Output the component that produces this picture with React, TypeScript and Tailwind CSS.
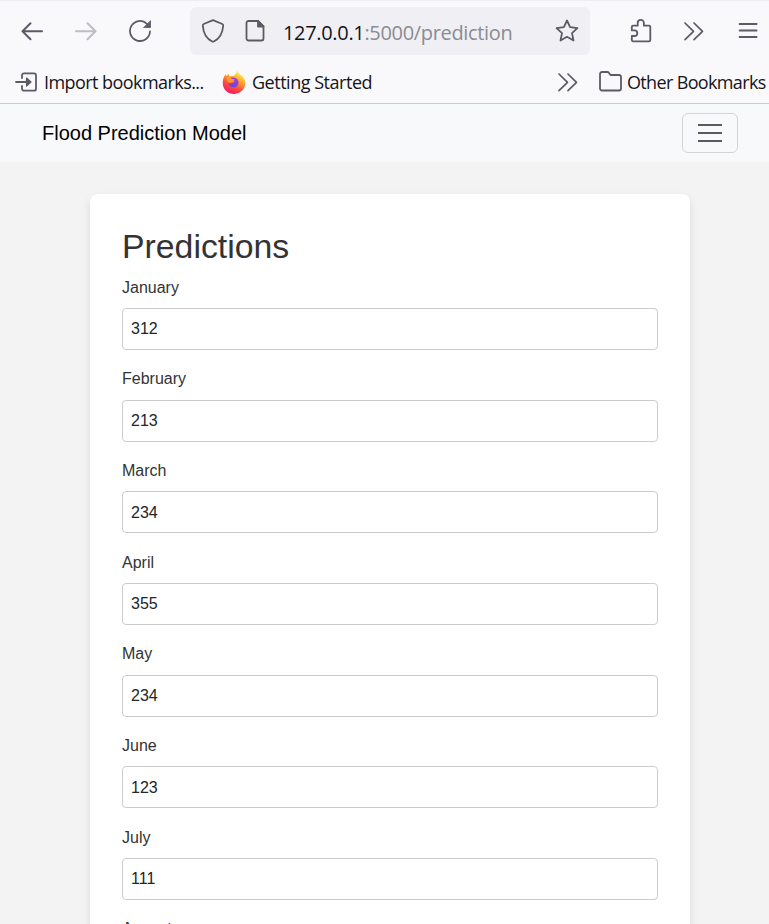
import React from "react";

const months: [string, string][] = [
  ["January", "312"],
  ["February", "213"],
  ["March", "234"],
  ["April", "355"],
  ["May", "234"],
  ["June", "123"],
  ["July", "111"],
  ["August", "222"],
];

function Icon({ className = "", size = 24, children }: { className?: string; size?: number; children: React.ReactNode }) {
  return (
    <svg
      width={size}
      height={size}
      viewBox={`0 0 ${size} ${size}`}
      fill="none"
      stroke="currentColor"
      strokeWidth="1.8"
      strokeLinecap="round"
      strokeLinejoin="round"
      className={`block shrink-0 ${className}`}
    >
      {children}
    </svg>
  );
}

function Chevrons({ className = "" }: { className?: string }) {
  return (
    <Icon className={className}>
      <path d="M4 4l8.500 8.300-8.500 8.300M13 4l8.500 8.300-8.500 8.300" strokeWidth="1.7" />
    </Icon>
  );
}

function FirefoxLogo() {
  return (
    <svg width="24" height="24" viewBox="0 0 24 24" className="ml-[18px] block shrink-0">
      <defs>
        <linearGradient id="flame" x1="0.8" y1="0" x2="0.3" y2="1">
          <stop offset="0.1" stopColor="#fff044" />
          <stop offset="0.4" stopColor="#ffa02a" />
          <stop offset="0.68" stopColor="#ff4b3e" />
          <stop offset="1" stopColor="#f5156c" />
        </linearGradient>
        <linearGradient id="globe" x1="0.7" y1="0" x2="0.3" y2="1">
          <stop offset="0" stopColor="#b038dc" />
          <stop offset="1" stopColor="#5a4be0" />
        </linearGradient>
      </defs>
      <path d="M15.3.2c.3 2.1 1.7 3.3 3.3 4.6 2.7 2.2 4.7 4.6 4.7 8.1A11 11 0 0 1 12 24C5.600 24 .7 19 .7 12.900c0-3.700 1.200-6.400 3-8.700l.9 2.100 1.700-2.500 1.500 2.600c2-.4 3.600-.2 4.600-.8C13.800 4.500 14.600 2.200 15.300.2z" fill="url(#flame)" />
      <path d="M8 8.600c2.700-2.100 6.500-.9 8 1.600 1.600 3-.5 7.200-4.500 7.100-2.900 0-5.100-2.100-5-4.700 1.300 1.200 3.100.9 4.400.1l1.800-1.300c-1.100-1-3.300-.6-4.700-2.800z" fill="url(#globe)" />
      <path d="M3.800 7.300c2.100-.5 3.700-.1 4.800.9 1 1.100 2.900.8 4.100 1.300-.4 1.500-2.100 1.500-3 2.600-1 .9-2.300.9-3.400.2z" fill="#ff9b26" />
    </svg>
  );
}

function Browser() {
  return (
    <header className="h-[104px] shrink-0 border-t border-b border-t-[#eeeef2] border-b-[#cbcbd0] bg-[#f9f9fb] font-['Open_Sans','Noto_Sans',sans-serif] text-[#5b5b66]">
      <div className="flex h-[60px] items-center pl-5">
        <Icon>
          <path d="M22 12.300H2.500M10.500 4.300L2.500 12.300l8 8" strokeWidth="2" />
        </Icon>
        <Icon className="ml-[30px] text-[#bdbdc3]">
          <path d="M2 12.300h19.500M13.500 4.300l8 8-8 8" strokeWidth="2" />
        </Icon>
        <Icon className="ml-[30px]">
          <path d="M19 4.800A10 10 0 1 0 22 12.500" />
          <path d="M22.500 2v6.500H16z" fill="currentColor" strokeWidth=".8" />
        </Icon>
        <div className="ml-[38px] flex h-12 w-[400px] items-center rounded-md bg-[#f0f0f4] pl-[11px]">
          <Icon>
            <path d="M12 1.200L21.300 5q1 .4.9 1.500C21.700 14 19 19.500 12.800 22.500q-.8.4-1.600 0C5 19.500 2.300 14 1.800 6.500Q1.700 5.400 2.700 5z" />
          </Icon>
          <Icon className="ml-[18px]">
            <path d="M5.500 2h9.500L20.500 7.500V19.500a2 2 0 0 1-2 2H5.500a2 2 0 0 1-2-2V4a2 2 0 0 1 2-2z" />
            <path d="M15 2v5.500h5.500z" fill="currentColor" />
          </Icon>
          <div className="ml-4 w-[232px] pt-[3px] text-[20px] leading-6 tracking-[-0.33px] whitespace-nowrap text-[#8b8b92]">
            <span className="text-[#15141a]">127.0.0.1</span>:5000/prediction
          </div>
          <Icon className="ml-10">
            <path d="M12 1.500l3.100 6.700 7.300.9-5.400 5 1.500 7.400-6.500-3.700-6.500 3.700L7 14.100l-5.400-5 7.300-.9z" />
          </Icon>
        </div>
        <Icon className="ml-[39px]">
          <path d="M2.800 10.500V8a1.300 1.300 0 0 1 1.300-1.300H8.700V4a3.100 3.100 0 0 1 6.200 0V6.700H20a1.300 1.300 0 0 1 1.300 1.300V21A1.300 1.300 0 0 1 20 22.300H4A1.300 1.300 0 0 1 2.800 21V17H5.500a2.800 2.800 0 0 0 0-5.600H2.800z" />
        </Icon>
        <Chevrons className="ml-[28px]" />
        <Icon className="ml-[31px]">
          <path d="M3.600 5h17M3.600 11.500h17M3.600 18h17" />
        </Icon>
      </div>
      <div className="flex h-[42px] items-center pl-[14px] text-[18px] whitespace-nowrap text-[#15141a]">
        <Icon className="text-[#5b5b66]">
          <path d="M8 8V5.300a2 2 0 0 1 2-2h10a2 2 0 0 1 2 2v13.400a2 2 0 0 1-2 2H10a2 2 0 0 1-2-2V16M2 12h14" />
          <path d="M12.500 8l4.500 4-4.500 4z" fill="currentColor" strokeWidth="1.2" />
        </Icon>
        <span className="ml-[6px] w-[160px] tracking-[-0.56px]">Import bookmarks...</span>
        <FirefoxLogo />
        <span className="ml-[6px] w-[122px] tracking-[-0.48px]">Getting Started</span>
        <Chevrons className="ml-[181px] text-[#5b5b66]" />
        <Icon className="ml-[19px] text-[#5b5b66]">
          <path d="M4 2h5.500q.8 0 1.300.7L12.500 5H21a2 2 0 0 1 2 2v11.500a2 2 0 0 1-2 2H4a2 2 0 0 1-2-2V4a2 2 0 0 1 2-2z" />
        </Icon>
        <span className="ml-[5px] tracking-[-0.65px]">Other Bookmarks</span>
      </div>
    </header>
  );
}

export default function App() {
  return (
    <div className="flex h-[924px] w-[769px] flex-col overflow-hidden bg-[#f3f3f3] font-['Liberation_Sans',Arial,sans-serif] text-[#333333]">
      <Browser />
      <nav className="flex h-[58px] shrink-0 items-center justify-between bg-[#f8f9fb] pr-[31px] pl-[42px]">
        <span className="text-[20px] leading-[30px] text-black">Flood Prediction Model</span>
        <button className="flex h-10 w-14 items-center justify-center rounded-md border border-[#d3d4d6] text-[#5a5b60]">
          <Icon size={30}>
            <path d="M4 7h22M4 15h22M4 23h22" strokeWidth="2" strokeLinecap="square" />
          </Icon>
        </button>
      </nav>
      <main className="mt-8 ml-[90px] w-[600px] shrink-0 rounded-lg bg-white p-8 shadow-[0_4px_8px_rgba(0,0,0,0.1)]">
        <h1 className="mb-2 text-[33.8px] leading-[41.66px]">Predictions</h1>
        {months.map(([month, value]) => (
          <div key={month} className="mb-[17px]">
            <label className="mb-[8.34px] block text-base leading-6">{month}</label>
            <input
              className="mb-[17.33px] block h-[42px] w-full rounded border border-[#cccccc] bg-white px-2 pt-px text-base text-[#212529]"
              defaultValue={value}
            />
          </div>
        ))}
      </main>
    </div>
  );
}
